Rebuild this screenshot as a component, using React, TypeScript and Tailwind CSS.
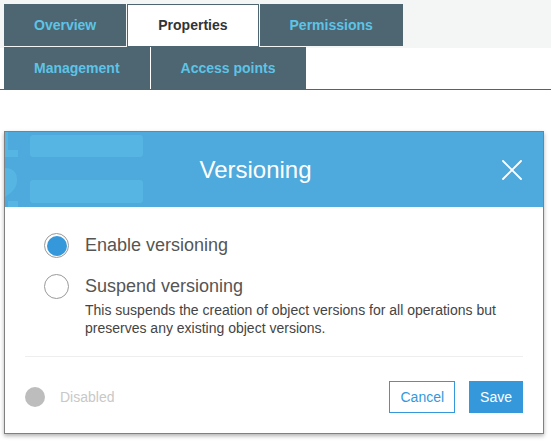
const font = { fontFamily: '"Liberation Sans", Arial, sans-serif' };

function Tab({ label, active = false }: { label: string; active?: boolean }) {
  if (active) {
    return (
      <div className="flex h-[43px] items-center border border-[#4e6572] bg-white px-[30px] text-[14px] font-bold text-[#333]">
        {label}
      </div>
    );
  }
  return (
    <div className="flex h-[42px] items-center bg-[#4e6572] px-[30px] text-[14px] font-bold text-[#5cc4e6]">
      {label}
    </div>
  );
}

function Radio({ checked }: { checked?: boolean }) {
  return (
    <span className="flex h-[25px] w-[25px] shrink-0 items-center justify-center rounded-full border border-[#9a9a9a] bg-white">
      {checked && <span className="h-[20px] w-[20px] rounded-full bg-[#3598db]" />}
    </span>
  );
}

function HeaderDecor() {
  return (
    <svg className="absolute left-0 top-0" width="150" height="75" viewBox="0 0 150 75" fill="#57b5e3">
      <rect x="25" y="3" width="113" height="22" rx="3" />
      <rect x="25" y="48" width="113" height="23" rx="3" />
      <path d="M0 0 h3 v18 h10 v7 h-13 z" />
      <path d="M0 36 c8 0 12 4 12 12 c0 7 -4 12 -12 17 z" />
      <rect x="3" y="69" width="10" height="6" />
    </svg>
  );
}

export default function App() {
  return (
    <div className="min-h-screen bg-white" style={font}>
      <div className="h-12 bg-[#f4f6f6] pl-1 pt-1">
        <div className="flex items-start gap-px">
          <Tab label="Overview" />
          <Tab label="Properties" active />
          <Tab label="Permissions" />
        </div>
      </div>
      <div className="-mt-px flex gap-px border-b border-[#4e6572] pl-1">
        <Tab label="Management" />
        <Tab label="Access points" />
      </div>

      <div className="ml-1 mt-[41px] w-[540px] border border-[#808080] bg-white shadow-[0_2px_4px_rgba(0,0,0,0.3)]">
        <div className="relative flex h-[75px] items-center overflow-hidden bg-[#4ea9dc]">
          <HeaderDecor />
          <div className="relative flex-1 pl-[4px] text-center text-[24px] text-white">Versioning</div>
          <button className="relative mr-[21px] flex h-5 w-5 items-center justify-center">
            <svg width="20" height="20" viewBox="0 0 20 20" stroke="white" strokeWidth="1.8" strokeLinecap="round">
              <path d="M1 1 L19 19 M19 1 L1 19" />
            </svg>
          </button>
        </div>

        <div className="px-5">
          <div className="pl-[19px] pt-[26px]">
            <div className="flex h-[25px] items-center gap-4">
              <Radio checked />
              <span className="text-[18px] text-[#555]">Enable versioning</span>
            </div>
            <div className="mt-4 flex h-[25px] items-center gap-4">
              <Radio />
              <span className="text-[18px] text-[#555]">Suspend versioning</span>
            </div>
            <p className="ml-[41px] mt-[2px] text-[14px] leading-[18px] text-[#444]">
              This suspends the creation of object versions for all operations but
              <br />
              preserves any existing object versions.
            </p>
          </div>

          <div className="mt-[19px] h-px bg-[#eeeeee]" />

          <div className="flex items-center pb-5 pt-[24px]">
            <span className="h-5 w-5 rounded-full bg-[#bdbdbd]" />
            <span className="ml-[15px] text-[14px] text-[#c8c8c8]">Disabled</span>
            <div className="ml-auto flex gap-[14px]">
              <button className="h-8 border border-[#3598db] bg-white px-[10px] text-[14px] text-[#3598db]">
                Cancel
              </button>
              <button className="h-8 border border-[#3598db] bg-[#3598db] px-[10px] text-[14px] text-white">
                Save
              </button>
            </div>
          </div>
        </div>
      </div>
    </div>
  );
}
